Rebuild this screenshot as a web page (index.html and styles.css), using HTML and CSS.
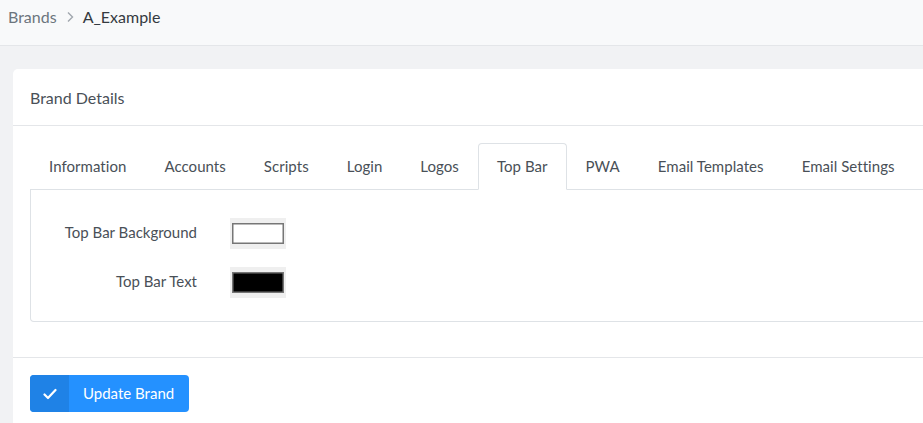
FILE: index.html
```html
<!DOCTYPE html>
<html>
<head>
<meta charset="utf-8">
<link rel="stylesheet" href="styles.css">
</head>
<body>
<header class="topbar">
  <nav class="crumbs">
    <span class="crumb-link">Brands</span>
    <svg class="crumb-sep" width="10" height="12" viewBox="0 0 10 12"><path d="M3 1.5 L7.5 6 L3 10.5" fill="none" stroke="#a0a6ad" stroke-width="1.4"/></svg>
    <span class="crumb-current">A_Example</span>
  </nav>
</header>
<main class="page">
  <section class="card">
    <div class="card-header">Brand Details</div>
    <div class="card-body">
      <ul class="tabs">
        <li class="tab">Information</li>
        <li class="tab">Accounts</li>
        <li class="tab">Scripts</li>
        <li class="tab">Login</li>
        <li class="tab">Logos</li>
        <li class="tab active">Top Bar</li>
        <li class="tab">PWA</li>
        <li class="tab">Email Templates</li>
        <li class="tab">Email Settings</li>
      </ul>
      <div class="tab-pane">
        <div class="form-row">
          <label class="form-label">Top Bar Background</label>
          <span class="swatch"><span class="swatch-inner white"></span></span>
        </div>
        <div class="form-row">
          <label class="form-label">Top Bar Text</label>
          <span class="swatch"><span class="swatch-inner black"></span></span>
        </div>
      </div>
    </div>
    <div class="card-footer">
      <button class="btn">
        <span class="btn-icon"><svg width="14" height="12" viewBox="0 0 14 12"><path d="M1.5 6.5 L5 10 L12.5 2" fill="none" stroke="#fff" stroke-width="2.2" stroke-linecap="round" stroke-linejoin="round"/></svg></span>
        <span class="btn-text">Update Brand</span>
      </button>
    </div>
  </section>
</main>
</body>
</html>
```
FILE: styles.css
```css
html, body {
  margin: 0;
  padding: 0;
  overflow: hidden;
}
body {
  background: #f1f2f4;
  font-family: "Source Sans Pro", Lato, "Noto Sans", sans-serif;
  font-size: 15px;
  color: #495057;
  width: 923px;
  height: 423px;
}
.topbar {
  height: 46px;
  background: #f8f9fa;
  border-bottom: 1px solid #e4e6e9;
  box-sizing: border-box;
  display: flex;
  align-items: center;
  padding-left: 8px;
}
.crumbs {
  display: flex;
  align-items: center;
  gap: 7px;
  font-size: 16px;
  margin-top: -12px;
}
.crumb-link { color: #6c757d; }
.crumb-current { color: #343a40; }
.crumb-sep { margin: 0 1px; }
.page {
  padding: 23px 0 0 13px;
}
.card {
  width: 1000px;
  background: #fff;
  border-radius: 5px 0 0 0;
}
.card-header {
  height: 57px;
  box-sizing: border-box;
  padding: 0 17px;
  display: flex;
  align-items: center;
  border-bottom: 1px solid #e4e6e9;
  color: #495057;
  font-size: 16px;
}
.card-body {
  padding: 17px 17px 35px 17px;
}
.tabs {
  list-style: none;
  margin: 0;
  padding: 0;
  display: flex;
  border-bottom: 1px solid #dee2e6;
  height: 47px;
  box-sizing: border-box;
}
.tab {
  padding: 0 18px 0 18px;
  height: 46px;
  box-sizing: border-box;
  display: flex;
  align-items: center;
  padding-bottom: 1px;
  border: 1px solid transparent;
  border-radius: 4px 4px 0 0;
  color: #495057;
  white-space: nowrap;
  letter-spacing: 0.05px;
}
.tab.active {
  border-color: #dee2e6 #dee2e6 #fff;
  height: 47px;
  background: #fff;
  color: #495057;
}
.tab-pane {
  border: 1px solid #dee2e6;
  border-top: none;
  border-radius: 0 0 4px 4px;
  padding: 28px 0 23px 0;
  display: flex;
  flex-direction: column;
  gap: 18px;
}
.form-row {
  display: flex;
  align-items: center;
  height: 31px;
}
.form-label {
  width: 166px;
  text-align: right;
  padding-right: 33px;
  padding-bottom: 4px;
  box-sizing: content-box;
  color: #495057;
}
.swatch {
  width: 56px;
  height: 31px;
  background: #efefef;
  display: flex;
  align-items: center;
  justify-content: center;
  box-sizing: border-box;
}
.swatch-inner {
  width: 52px;
  height: 21px;
  box-sizing: border-box;
  border: 1px solid #767676;
  box-shadow: inset 0 0 0 0.5px #767676;
}
.swatch-inner.white { background: #fff; }
.swatch-inner.black { background: #000; }
.card-footer {
  border-top: 1px solid #e4e6e9;
  padding: 17px 17px 20px 17px;
}
.btn {
  display: flex;
  align-items: stretch;
  height: 37px;
  padding: 0;
  border: none;
  border-radius: 4px;
  overflow: hidden;
  background: #2491ff;
  font-family: inherit;
  font-size: 15px;
  color: #fff;
}
.btn-icon {
  width: 39px;
  background: #1f82e6;
  display: flex;
  align-items: center;
  justify-content: center;
}
.btn-text {
  display: flex;
  align-items: center;
  padding: 0 15px 1px 14px;
}
```
